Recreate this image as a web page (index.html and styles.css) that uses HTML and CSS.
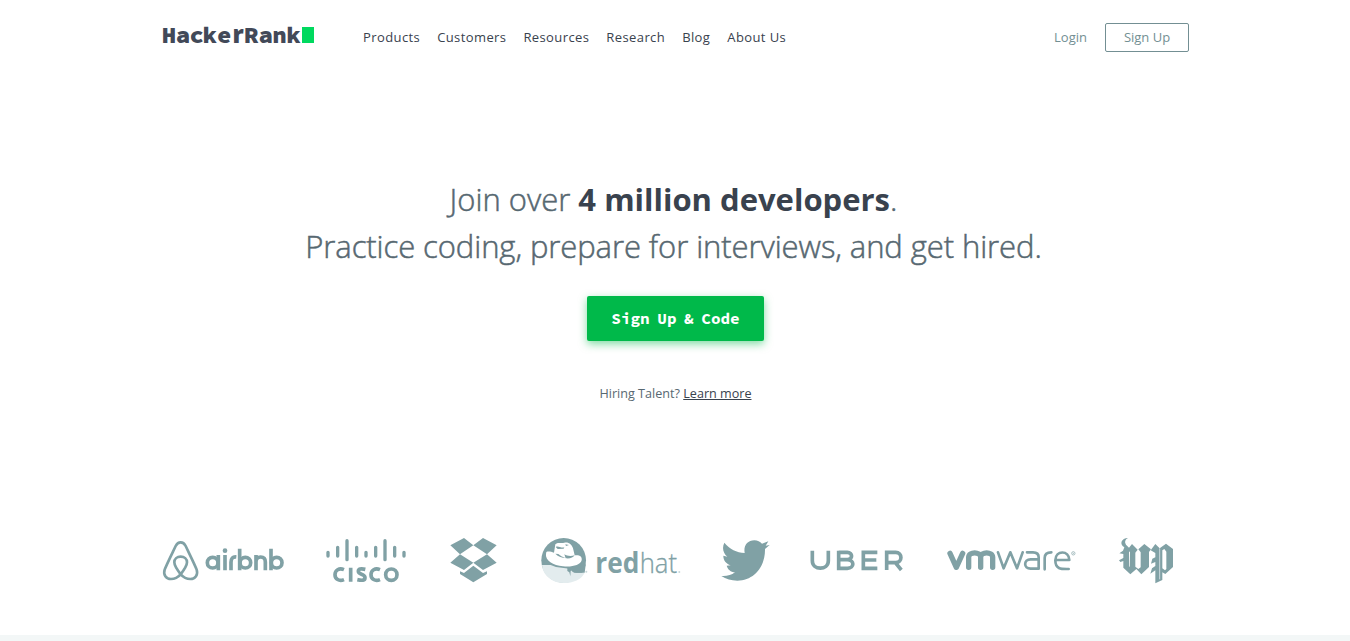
FILE: index.html
```html
<!DOCTYPE html>
<html lang="en">
<head>
<meta charset="utf-8">
<title>HackerRank</title>
<link rel="stylesheet" href="styles.css">
</head>
<body>
<header class="header">
  <a class="brand"><svg class="logo" width="160" height="30" viewBox="0 0 160 30"><text class="brand-text" x="-1.2 12.7 26.4 39.6 53.9 69.5 81.1 95.6 109.2 123.2" y="20">Hacke<tspan class="brand-r">r</tspan>Rank</text><rect x="139" y="4" width="12" height="16" fill="#00d95f"/></svg></a>
  <nav class="nav">
    <a>Products</a><a>Customers</a><a>Resources</a><a>Research</a><a>Blog</a><a>About Us</a>
  </nav>
  <div class="account"><a class="login">Login</a><a class="signup">Sign Up</a></div>
</header>
<main class="hero">
  <h1 class="headline">Join over <strong>4 million developers</strong>.<br><span class="tagline">Practice coding, prepare for interviews, and get hired.</span></h1>
  <a class="cta">Sign Up &amp; Code</a>
  <p class="hiring">Hiring Talent? <a class="more">Learn more</a></p>
</main>
<section class="logos">
  <svg class="logo" width="123" height="60" viewBox="36 0 369 180">
    <path fill="none" stroke="#80a1a5" stroke-width="8" stroke-linejoin="round" d="M92 133C82 120 73 107 73 97C73 87 81 80 92 80S111 87 111 97C111 107 102 120 92 133C84 142 74 147 63 147C48 147 39 134 44 119C49 105 69 65 77 48C81 40 86 37 92 37S103 40 107 48C115 65 135 105 140 119C145 134 136 147 121 147C110 147 100 142 92 133Z"/>
    <g fill="none" stroke="#80a1a5" stroke-width="11">
      <circle cx="188" cy="98" r="16"/><path d="M205 75V121M225 75V121M243 121V97Q243 79 259 81M269 56V121M318 121V75M318 121V96Q318 81 332 81T346 96V121M363 56V121"/>
      <circle cx="286" cy="98" r="16"/><circle cx="380" cy="98" r="16"/>
    </g><circle cx="225" cy="62" r="7" fill="#80a1a5"/>
  </svg>
  <svg class="logo" width="84" height="60" viewBox="30 0 252 180">
    <path fill="none" stroke="#80a1a5" stroke-width="10" stroke-linecap="round" d="M39 67V78M68 52V78M96 32V89M125 52V78M153 67V78M182 52V78M210 32V89M239 52V78M267 67V78"/>
    <path fill="none" stroke="#80a1a5" stroke-width="11" d="M87 119C72 113 60 121 60 134S72 155 87 149M107 113V155M151 118C137 115 130 117 130 124C130 135 150 130 150 143C150 152 141 152 127 149M195 119C180 113 168 121 168 134S180 155 195 149"/><circle cx="229" cy="134" r="17" fill="none" stroke="#80a1a5" stroke-width="11"/>
  </svg>
  <svg class="logo" width="51" height="60" viewBox="402 0 153 180">
    <path fill="#80a1a5" d="M406 46L447 24L475 46L435 73ZM475 46L504 24L545 46L516 73ZM406 98L435 73L475 98L447 120ZM475 98L516 73L545 98L504 120ZM435 124L447 129L475 107L504 129L516 124V132L475 157L435 132Z"/>
  </svg>
  <svg class="logo" width="140" height="60" viewBox="30 0 420 180">
    <circle cx="101" cy="91" r="67" fill="#80a1a5"/>
    <path fill="#e3ecee" d="M36 105L62 105L78 111L118 116L132 128L164 128C155 148 130 159 101 159C66 159 38 136 36 105Z"/>
    <path fill="#80a1a5" d="M112 111L133 106L129 118L122 123L121 139L118 127L112 123ZM130 104L160 88L167 105L164 128H138L126 124Z"/>
    <path fill="#fff" d="M49 66C56 63 64 66 72 68L76 43C84 35 93 42 103 38C118 36 125 44 129 55L134 76C149 74 157 80 155 91C151 106 125 112 99 109C70 107 45 91 48 72Z"/>
    <path fill="#80a1a5" d="M76 71C84 80 98 83 106 84L94 79L85 72ZM103 73L107 85C120 87 130 82 134 76C122 79 111 78 103 73ZM77 51C84 46 93 55 103 52L101 56L83 57ZM106 43L117 45L108 48Z"/>
    <circle cx="169" cy="125" r="3" fill="#c8d7d9"/>
    <text class="redhat-bold" x="196" y="128" textLength="132" lengthAdjust="spacingAndGlyphs">red</text>
    <text class="redhat-light" x="329" y="128" textLength="112" lengthAdjust="spacingAndGlyphs">hat</text>
    <circle cx="448" cy="126" r="3" fill="#c8d7d9"/>
  </svg>
  <svg class="logo" width="49" height="60" viewBox="31 0 147 180">
    <path fill="#80a1a5" d="M44 38C60 57 81 68 105 69C101 48 113 31 134 31C144 31 151 35 157 41L176 34L168 47L180 45L166 57C167 111 132 152 83 152C65 152 49 147 35 138C51 139 65 136 76 127C63 126 54 118 51 107L63 106C49 101 41 91 41 77L53 80C41 70 36 54 44 38Z"/>
  </svg>
  <svg class="logo" width="96" height="60" viewBox="297 0 288 180">
    <path fill="none" stroke="#80a1a5" stroke-width="11" d="M307 62V92C307 122 355 122 355 92V62M386 67H412C429 67 429 89 412 89H386M412 89C434 89 434 115 412 115H386V62M502 67H460V115H502M460 90H499M530 120V67H557C578 67 578 98 557 98H530M556 98L574 120"/>
  </svg>
  <svg class="logo" width="133" height="60" viewBox="15 0 399 180">
    <path fill="none" stroke="#80a1a5" stroke-width="16" stroke-linecap="round" stroke-linejoin="round" d="M30 70L49 112L68 70M86 112V82C86 64 122 64 122 82V112M122 82C122 64 158 64 158 82V112"/>
    <path fill="none" stroke="#80a1a5" stroke-width="8" stroke-linecap="round" stroke-linejoin="round" d="M174 67L191 115L211 67L231 115L248 67M261 67H279Q296 67 296 82V116H272C250 116 250 88 272 88H296M314 118V84Q314 67 334 67M347 90H388C388 60 346 60 346 91C346 119 365 117 386 117"/>
    <circle cx="400" cy="70" r="5" fill="none" stroke="#80a1a5" stroke-width="2"/><circle cx="400" cy="70" r="1.5" fill="#80a1a5"/>
  </svg>
  <svg class="logo" width="57" height="60" viewBox="24 0 171 180">
    <path fill="#80a1a5" d="M54 24C34 24 27 43 43 52L39 62L28 70L40 72V84L27 91L31 96L40 93V113L61 133L79 117L94 133L117 111V66L123 58L103 42L85 58L92 67V112L85 117L76 110V68L83 59L66 42L57 53L48 44C43 36 45 29 54 24ZM57 64L60 67V109L58 111Z"/>
    <path fill="#80a1a5" d="M122 61L136 42L149 55L168 41L189 57V111L166 132L157 127V150L136 160V121L121 131L126 115L136 108V96L123 101L127 86L136 82V69ZM157 61V115L165 121L169 117V65L163 57Z"/>
    <path stroke="#cbdadd" stroke-width="3" fill="none" d="M149 55V148"/>
  </svg>
</section>
<div class="next"></div>
</body>
</html>
```

FILE: styles.css
```css
body { margin: 0; height: 641px; overflow: hidden; display: flex; flex-direction: column; background: #fff; font-family: "Open Sans", "Liberation Sans", sans-serif; font-size: 13px; color: #39424e; }
.header { display: flex; align-items: flex-start; width: 1026px; margin-left: 163px; height: 78px; }
.brand { display: block; margin-top: 23px; height: 30px; width: 200px; }
.brand-text { font: 900 24px "Source Code Pro", "Noto Sans CJK SC", sans-serif; fill: #424958; }
.brand-r { font: 800 24px "Open Sans", sans-serif; }
.nav { display: flex; gap: 17px; margin-top: 27px; line-height: 20px; letter-spacing: .4px; }
.account { display: flex; margin-left: auto; margin-top: 23px; gap: 18px; color: #738f93; }
.login { line-height: 29px; }
.signup { box-sizing: border-box; width: 84px; height: 29px; line-height: 27px; text-align: center; border: 1px solid #738f93; border-radius: 2px; }
.hero { display: flex; flex-direction: column; align-items: center; padding-top: 98px; height: 354px; }
.headline { margin: 0 3px 0 0; font-size: 31px; font-weight: 300; line-height: 47px; text-align: center; color: #576871; white-space: nowrap; -webkit-text-stroke: .5px #576871; }
.headline strong { font-weight: 700; color: #39424e; -webkit-text-stroke: 0; }
.tagline { letter-spacing: -.08px; }
.cta { box-sizing: border-box; width: 177px; height: 45px; margin-top: 26px; margin-left: 1px; border-radius: 2px; background: #00b94a; box-shadow: 0 3px 8px rgba(0, 185, 74, .5); color: #fff; font: 700 16px/45px "Source Code Pro", "Noto Sans Mono CJK SC", "Noto Sans CJK SC", monospace; word-spacing: -2px; text-align: center; white-space: pre; }
.hiring { margin: 43px 0 0 1px; line-height: 20px; font-size: 12.6px; color: #576871; }
.more { color: #39424e; text-decoration: underline; }
.logos { display: flex; gap: 40px; margin-left: 162px; height: 60px; }
.logo { display: block; flex: none; overflow: visible; }
.redhat-bold { font: 700 84px "Open Sans", sans-serif; fill: #80a1a5; }
.redhat-light { font: 300 84px "Open Sans", sans-serif; fill: #80a1a5; stroke: #80a1a5; stroke-width: 1px; }
.next { height: 6px; margin-top: auto; background: #f3f7f7; }
```
